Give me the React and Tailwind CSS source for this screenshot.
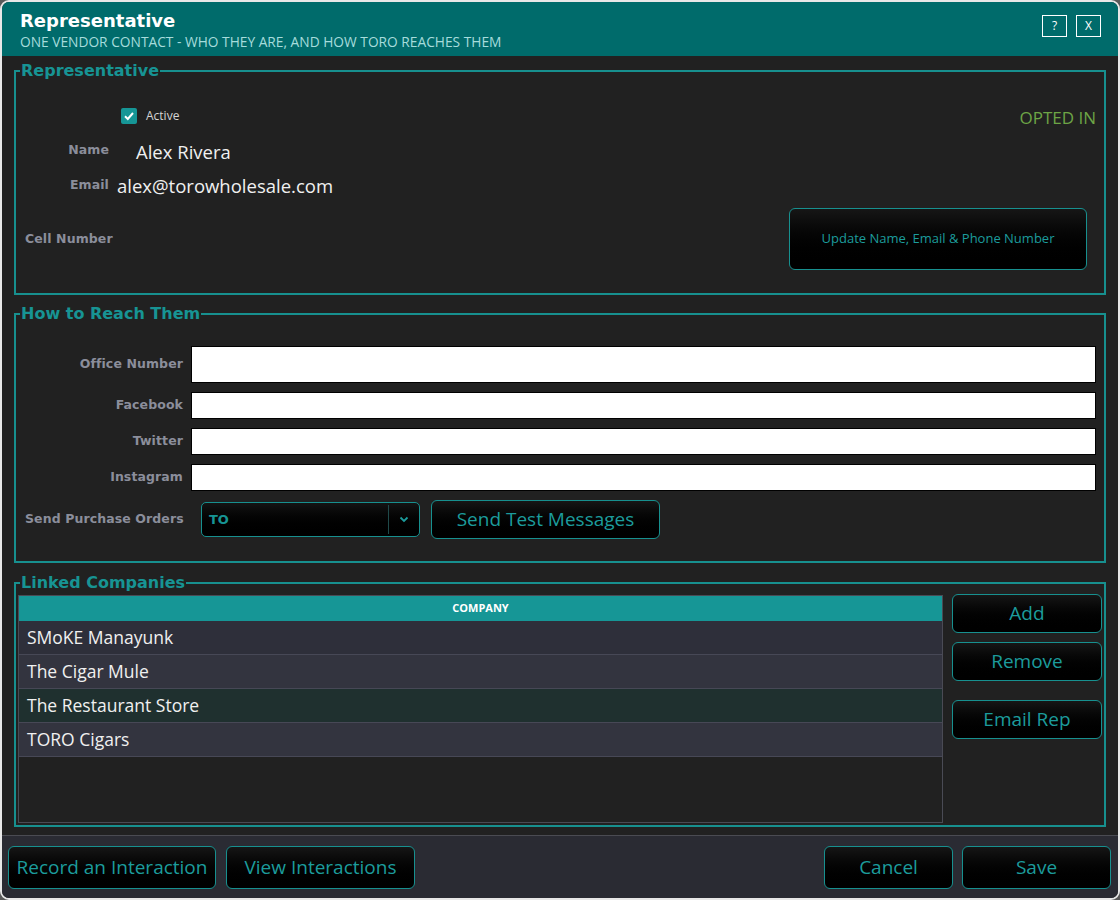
import React from "react";

const sans = "font-['Open_Sans','Noto_Sans',sans-serif]";
const wide = "font-['DejaVu_Sans','Verdana',sans-serif]";

const btn =
  "flex items-center justify-center rounded-[6px] border border-[#17908f] bg-gradient-to-b from-[#161616] to-[#000000] text-[#1c9c9c] " +
  sans;

const Label = ({ children, className = "" }) => (
  <div className={`${wide} text-[12.5px] font-bold tracking-[0.1px] text-[#8b8e9b] ${className}`}>{children}</div>
);

const Legend = ({ children }) => (
  <legend className={`${wide} ml-[4px] px-[1px] text-[16px] font-bold leading-[18px] text-[#179494]`}>
    {children}
  </legend>
);

const companies = [
  { name: "SMoKE Manayunk", bg: "bg-[#2e2f3a]" },
  { name: "The Cigar Mule", bg: "bg-[#33343f]" },
  { name: "The Restaurant Store", bg: "bg-[#1f302f]" },
  { name: "TORO Cigars", bg: "bg-[#33343f]" },
];

const App = () => {
  return (
    <div className="h-[900px] w-[1120px] bg-[#5a5a5a]">
      <div className="flex h-full w-full flex-col overflow-hidden rounded-[9px] border-2 border-[#e8e8e8] bg-[#212121]">
        {/* Header */}
        <div className="flex h-[54px] shrink-0 items-start justify-between bg-[#006b6b] pl-[18px] pr-[17px]">
          <div className="pt-[8px]">
            <div className={`${wide} text-[18px] font-bold leading-[22px] text-white`}>Representative</div>
            <div className={`${sans} mt-[1px] text-[13.75px] leading-[18px] text-[#a6dcdc]`}>
              ONE VENDOR CONTACT - WHO THEY ARE, AND HOW TORO REACHES THEM
            </div>
          </div>
          <div className="mt-[13px] flex gap-[9px]">
            <div className={`${sans} flex h-[22px] w-[25px] items-center justify-center border border-white text-[12px] text-white`}>?</div>
            <div className={`${sans} flex h-[22px] w-[25px] items-center justify-center border border-white text-[12px] text-white`}>X</div>
          </div>
        </div>

        {/* Body */}
        <div className="flex-1 px-[12px] pt-[6px]">
          {/* Representative */}
          <fieldset className="h-[233px] border-2 border-[#17908f] p-0 pr-[17px]">
            <Legend>Representative</Legend>
            <div className="mt-[28px] flex h-[16px] items-center justify-between pl-[105px]">
              <div className="flex items-center gap-[9px]">
                <div className="flex h-[16px] w-[16px] items-center justify-center rounded-[2px] bg-[#169696]">
                  <svg width="12" height="12" viewBox="0 0 12 12">
                    <path d="M2 6.3 L4.8 9 L10 3" fill="none" stroke="white" strokeWidth="2" />
                  </svg>
                </div>
                <span className={`${sans} text-[12px] text-[#d4d4d4]`}>Active</span>
              </div>
              <span className={`${sans} mr-[-9px] mt-[2px] text-[17px] leading-none text-[#6da546]`}>OPTED IN</span>
            </div>
            <div className="mt-[16px] flex h-[24px] items-center">
              <Label className="w-[93px] -translate-y-[2px] text-right">Name</Label>
              <span className={`${sans} ml-[27px] text-[18.5px] text-[#f0f0f0]`}>Alex Rivera</span>
            </div>
            <div className="mt-[10px] flex h-[24px] items-center">
              <Label className="w-[93px] -translate-y-[1px] text-right">Email</Label>
              <span className={`${sans} ml-[8px] text-[18.5px] text-[#f0f0f0]`}>alex@torowholesale.com</span>
            </div>
            <div className="mt-[10px] flex h-[62px] items-center justify-between">
              <Label className="pl-[9px]">Cell Number</Label>
              <div className={`${btn} h-[62px] w-[298px] text-[13px]`}>Update Name, Email &amp; Phone Number</div>
            </div>
          </fieldset>

          {/* How to Reach Them */}
          <fieldset className="mt-[10px] h-[258px] border-2 border-[#17908f] p-0 pr-[8px]">
            <Legend>How to Reach Them</Legend>
            <div className="mt-[23px] flex items-center">
              <Label className="w-[167px] text-right">Office Number</Label>
              <div className="ml-[8px] h-[37px] flex-1 border border-black bg-white" />
            </div>
            {["Facebook", "Twitter", "Instagram"].map((l) => (
              <div key={l} className="mt-[9px] flex items-center">
                <Label className="w-[167px] text-right">{l}</Label>
                <div className="ml-[8px] h-[27px] flex-1 border border-black bg-white" />
              </div>
            ))}
            <div className="mt-[9px] flex h-[39px] items-center">
              <Label className="w-[167px] whitespace-nowrap pl-[9px]">Send Purchase Orders</Label>
              <div className="ml-[18px] flex h-[35px] w-[219px] items-center rounded-[5px] border border-[#17908f] bg-gradient-to-b from-[#141414] to-[#000000]">
                <span className={`${wide} flex-1 pl-[7px] text-[13px] font-bold text-[#179494]`}>TO</span>
                <div className="h-[29px] w-px bg-[#1f4a4a]" />
                <div className="flex w-[30px] items-center justify-center">
                  <svg width="10" height="7" viewBox="0 0 10 7">
                    <path d="M1.5 1.5 L5 5 L8.5 1.5" fill="none" stroke="#1c9c9c" strokeWidth="1.8" />
                  </svg>
                </div>
              </div>
              <div className={`${btn} ml-[11px] h-[39px] w-[229px] text-[19px]`}>Send Test Messages</div>
            </div>
          </fieldset>

          {/* Linked Companies */}
          <fieldset className="mt-[11px] h-[253px] border-2 border-[#17908f] p-0">
            <Legend>Linked Companies</Legend>
            <div className="ml-[2px] mt-[3px] flex">
              <div className="h-[228px] w-[925px] border border-[#4a4b55]">
                <div className={`${sans} flex h-[25px] items-center justify-center bg-[#169696] text-[11px] font-bold text-white`}>
                  COMPANY
                </div>
                {companies.map((c) => (
                  <div
                    key={c.name}
                    className={`${sans} ${c.bg} flex h-[34px] items-center border-b border-[#474856] pl-[8px] text-[17.5px] text-[#f0f0f0]`}
                  >
                    {c.name}
                  </div>
                ))}
              </div>
              <div className="ml-[9px] flex w-[150px] flex-col">
                <div className={`${btn} -mt-[1px] h-[39px] text-[19px]`}>Add</div>
                <div className={`${btn} mt-[9px] h-[39px] text-[19px]`}>Remove</div>
                <div className={`${btn} mt-[19px] h-[39px] text-[19px]`}>Email Rep</div>
              </div>
            </div>
          </fieldset>
        </div>

        {/* Footer */}
        <div className="flex h-[63px] shrink-0 items-start justify-between border-t border-[#4a4b52] bg-[#2a2b33] pl-[6px] pr-[7px] pt-[10px]">
          <div className="flex gap-[10px]">
            <div className={`${btn} h-[43px] w-[208px] text-[19px]`}>Record an Interaction</div>
            <div className={`${btn} h-[43px] w-[189px] text-[19px]`}>View Interactions</div>
          </div>
          <div className="flex gap-[9px]">
            <div className={`${btn} h-[43px] w-[129px] text-[19px]`}>Cancel</div>
            <div className={`${btn} h-[43px] w-[149px] text-[19px]`}>Save</div>
          </div>
        </div>
      </div>
    </div>
  );
};

export default App;
